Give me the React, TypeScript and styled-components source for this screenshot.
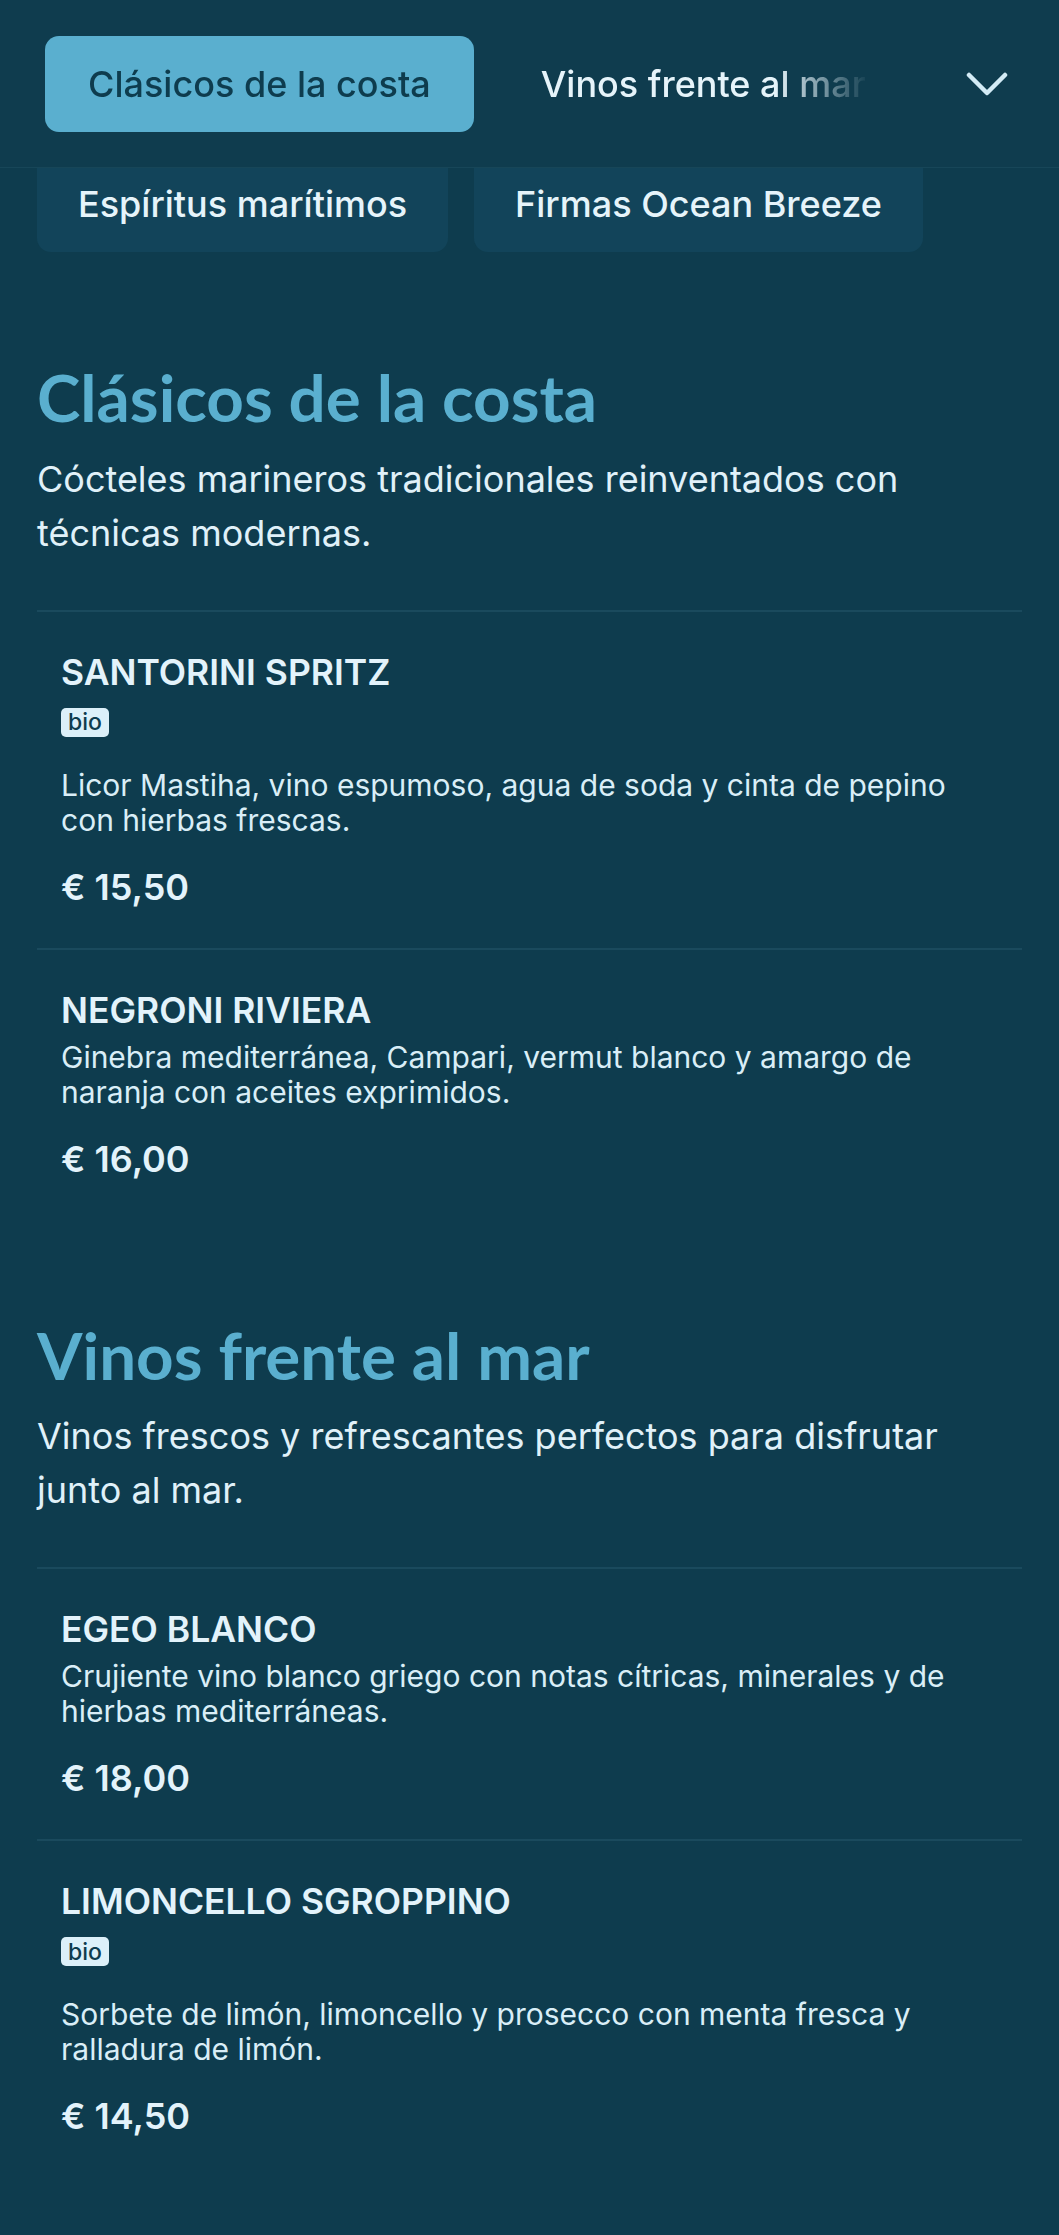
import React from 'react';
import styled, { createGlobalStyle } from 'styled-components';

const GlobalStyle = createGlobalStyle`
  html, body {
    margin: 0;
    padding: 0;
    background: #0e3c4e;
  }
  body {
    font-family: Inter, "Noto Sans", sans-serif;
    color: #e0f1f9;
    -webkit-font-smoothing: antialiased;
  }
  * { box-sizing: border-box; }
`;

const Page = styled.div`
  min-height: 2235px;
  background: #0e3c4e;
`;

const Header = styled.header`
  height: 168px;
  display: flex;
  align-items: center;
  padding: 0 37px 0 45px;
  background: #0f3c4e;
  border-bottom: 1px solid #174658;
`;

const TabScroller = styled.nav`
  flex: 1;
  display: flex;
  gap: 24px;
  overflow: hidden;
  margin-right: 87px;
  mask-image: linear-gradient(to right, #000 calc(100% - 95px), transparent);
  -webkit-mask-image: linear-gradient(to right, #000 calc(100% - 95px), transparent);
`;

const Tab = styled.button<{ $active?: boolean }>`
  flex: none;
  height: 96px;
  padding: 0 43px;
  border: none;
  border-radius: 14px;
  font-family: Inter, sans-serif;
  font-size: 36px;
  font-weight: 500;
  white-space: nowrap;
  background: ${p => (p.$active ? '#5aafcf' : 'transparent')};
  color: ${p => (p.$active ? '#0e3c4e' : '#e6f4fa')};
`;

const Toggle = styled.button`
  flex: none;
  width: 60px;
  height: 60px;
  margin-right: 5px;
  display: flex;
  align-items: center;
  justify-content: center;
  background: none;
  border: none;
  padding: 0;
`;

const SubNav = styled.div`
  display: flex;
  gap: 26px;
  padding: 0 37px;
`;

const SubTab = styled.button`
  height: 84px;
  padding: 0 41px 12px;
  border: none;
  border-radius: 0 0 14px 14px;
  background: #12445a;
  color: #e6f4fa;
  font-family: Inter, sans-serif;
  font-size: 36px;
  font-weight: 500;
  white-space: nowrap;
  display: flex;
  align-items: center;
`;

const Main = styled.main`
  padding: 106px 37px 53px;
`;

const Section = styled.section`
  & + & {
    margin-top: 96px;
  }
`;

const SectionTitle = styled.h2`
  margin: 0;
  font-family: Lato, "Open Sans", sans-serif;
  font-weight: 700;
  font-size: 65.5px;
  line-height: 1.2;
  color: #5aafcf;
`;

const SectionIntro = styled.p`
  margin: 15px 0 50px;
  font-size: 36px;
  line-height: 54px;
  color: #e0f1f9;
`;

const Item = styled.article`
  border-top: 2px solid #1a4a5d;
  padding: 40px 40px 39px 24px;
`;

const ItemName = styled.h3`
  margin: 0 0 8px;
  font-size: 35.5px;
  line-height: 42px;
  font-weight: 600;
  color: #e3f3fb;
`;

const Tags = styled.div`
  display: flex;
  gap: 8px;
  margin: 14px 0 31px;
`;

const Tag = styled.span`
  display: inline-flex;
  align-items: center;
  height: 29px;
  padding: 0 7px;
  border-radius: 5px;
  background: #dcf0f9;
  color: #0e3c4e;
  font-size: 23px;
  font-weight: 500;
`;

const ItemDesc = styled.p`
  margin: 0 0 27px;
  font-size: 30px;
  line-height: 35px;
  color: #d9eef7;
`;

const Price = styled.div`
  font-size: 36px;
  line-height: 44px;
  font-weight: 600;
  color: #e3f3fb;
`;

type Drink = { name: string; tags?: string[]; desc: string; price: string };

const sections: { title: string; intro: string; items: Drink[] }[] = [
  {
    title: 'Clásicos de la costa',
    intro: 'Cócteles marineros tradicionales reinventados con técnicas modernas.',
    items: [
      {
        name: 'SANTORINI SPRITZ',
        tags: ['bio'],
        desc: 'Licor Mastiha, vino espumoso, agua de soda y cinta de pepino con hierbas frescas.',
        price: '€ 15,50',
      },
      {
        name: 'NEGRONI RIVIERA',
        desc: 'Ginebra mediterránea, Campari, vermut blanco y amargo de naranja con aceites exprimidos.',
        price: '€ 16,00',
      },
    ],
  },
  {
    title: 'Vinos frente al mar',
    intro: 'Vinos frescos y refrescantes perfectos para disfrutar junto al mar.',
    items: [
      {
        name: 'EGEO BLANCO',
        desc: 'Crujiente vino blanco griego con notas cítricas, minerales y de hierbas mediterráneas.',
        price: '€ 18,00',
      },
      {
        name: 'LIMONCELLO SGROPPINO',
        tags: ['bio'],
        desc: 'Sorbete de limón, limoncello y prosecco con menta fresca y ralladura de limón.',
        price: '€ 14,50',
      },
    ],
  },
];

const Chevron = () => (
  <svg width="42" height="24" viewBox="0 0 42 24" fill="none">
    <polyline points="3,3 21,21 39,3" stroke="#d3ebf5" strokeWidth="4.5" strokeLinecap="round" strokeLinejoin="round" />
  </svg>
);

export default function App() {
  return (
    <Page>
      <GlobalStyle />
      <Header>
        <TabScroller>
          <Tab $active>Clásicos de la costa</Tab>
          <Tab>Vinos frente al mar</Tab>
          <Tab>Espíritus marítimos</Tab>
        </TabScroller>
        <Toggle aria-label="Mostrar categorías">
          <Chevron />
        </Toggle>
      </Header>
      <SubNav>
        <SubTab>Espíritus marítimos</SubTab>
        <SubTab>Firmas Ocean Breeze</SubTab>
      </SubNav>
      <Main>
        {sections.map(s => (
          <Section key={s.title}>
            <SectionTitle>{s.title}</SectionTitle>
            <SectionIntro>{s.intro}</SectionIntro>
            {s.items.map(it => (
              <Item key={it.name}>
                <ItemName>{it.name}</ItemName>
                {it.tags && (
                  <Tags>
                    {it.tags.map(t => (
                      <Tag key={t}>{t}</Tag>
                    ))}
                  </Tags>
                )}
                <ItemDesc>{it.desc}</ItemDesc>
                <Price>{it.price}</Price>
              </Item>
            ))}
          </Section>
        ))}
      </Main>
    </Page>
  );
}
